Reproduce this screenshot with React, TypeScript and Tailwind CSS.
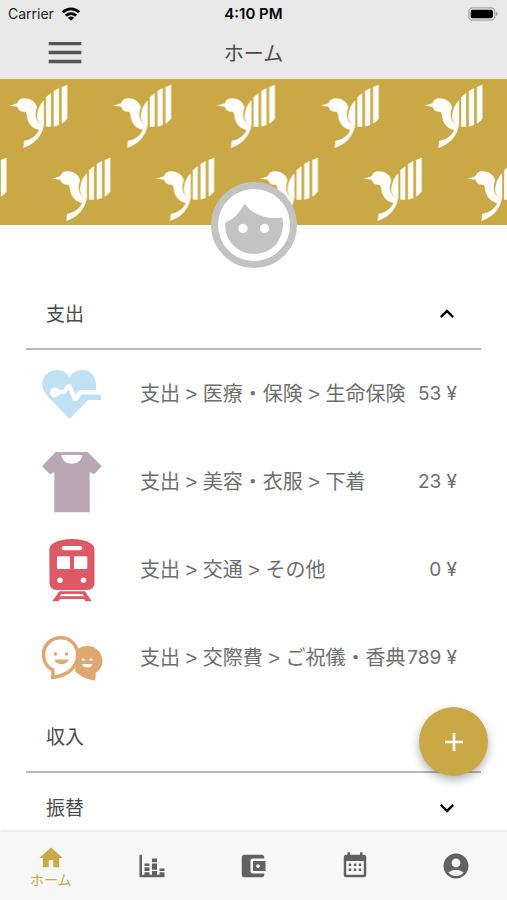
import React, { useState } from 'react';
import {
  MdAccountBalanceWallet,
  MdAccountCircle,
  MdHome,
  MdKeyboardArrowDown,
  MdKeyboardArrowUp,
} from 'react-icons/md';

interface Entry {
  label: string;
  amount: number;
  icon: React.ReactNode;
}

const HeartIcon = () => (
  <svg viewBox="0 0 64 64" className="size-16" aria-hidden="true">
    <path
      fill="#bfe1f3"
      d="M29.500 15C26 10.500 21.500 8 17 8 8.500 8 2.300 14.500 2.300 22c0 5 2 8.500 5.200 12L29.500 57 48 38h13v-8H55.500c.5-2 .7-4 .7-6C56.200 14 50 8 42.500 8 37 8 33 10.500 29.500 15z"
    />
    <path
      fill="none"
      stroke="#fff"
      strokeWidth="4.400"
      strokeLinejoin="bevel"
      d="M15 30h9l5-6.500 6.500 14.500 4.500-7.800h24"
    />
    <circle cx="15" cy="30.500" r="5" fill="#fff" />
  </svg>
);

const ShirtIcon = () => (
  <svg viewBox="0 0 64 64" className="size-16" aria-hidden="true">
    <path
      fill="#bba7b3"
      fillRule="evenodd"
      d="M15.700 2h32l14 14.300-7.700 8-4.300-2.300v40.300H14.300V22L10 24.300l-8-8zM21.300 5c.700 5.500 5 8.700 10.500 8.700S41.600 10.500 42.300 5z"
    />
  </svg>
);

const TrainIcon = () => (
  <svg viewBox="0 0 64 64" className="size-16" aria-hidden="true">
    <path
      fill="#dc5a64"
      d="M9.300 12c0-3 1.500-5.500 4.500-7C19 2 25 1 32 1s13 1 18 4c3 1.500 4.500 4 4.500 7v33c0 4-3 7-7 7h-31c-4 0-7-3-7-7z"
    />
    <rect x="21.700" y="8" width="20.500" height="4.300" rx="2" fill="#fff" />
    <rect x="17" y="18.300" width="13" height="12.700" rx="1" fill="#fff" />
    <rect x="34" y="18.300" width="13.300" height="12.700" rx="1" fill="#fff" />
    <circle cx="20" cy="42.300" r="2.700" fill="#fff" />
    <circle cx="43.500" cy="42.300" r="2.700" fill="#fff" />
    <path
      fill="#dc5a64"
      fillRule="evenodd"
      d="M19.300 53.300H45l6.700 10h-6.300L44 61H20l-1.400 2.300h-6.300zM21.300 56l-1.300 2.200h24L42.700 56z"
    />
  </svg>
);

const ChatIcon = () => (
  <svg viewBox="0 0 64 64" className="size-16" aria-hidden="true">
    <path
      fill="#dfa871"
      d="M47.500 20A15 15 0 0 1 62.500 35c0 5-2.600 9.300-7 12 .400 3 .200 5-.500 7.500-7-1-14-3-20-9.500l3-22c2.500-2 6-3 9.500-3z"
    />
    <path
      fill="#fff"
      stroke="#dfa871"
      strokeWidth="3.500"
      strokeLinejoin="round"
      d="M20.700 11.800c9.600 0 17 7.200 17 17 0 12.500-9.700 20.700-25.200 22.700.7-3 .7-5.200.2-7.700C7 41.300 3.500 35.500 3.500 28.800c0-9.800 7.600-17 17.200-17z"
    />
    <circle cx="15.500" cy="28" r="1.700" fill="#dfa871" />
    <circle cx="26.500" cy="28" r="1.700" fill="#dfa871" />
    <path fill="#dfa871" d="M14.500 33.500h14c-.5 3-3.500 4.500-7 4.500s-6.500-1.500-7-4.500z" />
    <circle cx="43.300" cy="33.700" r="1.300" fill="#fff" />
    <circle cx="51" cy="33.700" r="1.300" fill="#fff" />
    <path fill="#fff" d="M42 38h10.500c-.5 2.500-2.500 3.500-5.200 3.500S42.500 40.500 42 38z" />
  </svg>
);

const FaceIcon = () => (
  <svg viewBox="0 0 86 86" className="size-[86px]" aria-hidden="true">
    <circle cx="43" cy="43" r="39.500" fill="#fff" stroke="#c3c3c3" strokeWidth="7" />
    <path
      fill="#c3c3c3"
      d="M14.500 40.500C23 37 29.500 30 33.500 21.500 41 32 54 38 71.500 35.500 73 44 71.500 54 65 62.500 53 75 34 75 22 63 16 56.500 13.500 49 14.500 40.500z"
    />
    <circle cx="32" cy="46.500" r="4.700" fill="#fff" />
    <circle cx="53.500" cy="46.500" r="4.700" fill="#fff" />
  </svg>
);

const StackedBarsIcon = () => (
  <svg viewBox="0 0 24 24" className="size-[30px]" fill="currentColor" aria-hidden="true">
    <path d="M22 21H2V3h2v16h2v-2h4v2h2v-3h4v3h2v-2h4zM18 14h4v2h-4zM12 6h4v3h-4zM16 15h-4v-5h4zM6 10h4v2H6zM10 16H6v-3h4z" />
  </svg>
);

const CalendarIcon = () => (
  <svg viewBox="0 0 24 24" className="size-[30px]" fill="currentColor" aria-hidden="true">
    <path d="M9 10v2H7v-2zM13 10v2h-2v-2zM17 10v2h-2v-2zM19 3a2 2 0 0 1 2 2v14a2 2 0 0 1-2 2H5a2 2 0 0 1-2-2V5a2 2 0 0 1 2-2h1V1h2v2h8V1h2v2zM19 19V8H5v11zM9 14v2H7v-2zM13 14v2h-2v-2zM17 14v2h-2v-2z" />
  </svg>
);

const WifiIcon = () => (
  <svg viewBox="0 0 18 14" className="h-3.5 w-[18px]" aria-hidden="true">
    <path fill="none" stroke="#000" strokeWidth="2.800" d="M.9 5.200c4.600-4.500 11.600-4.500 16.200 0M3.900 8.800c2.900-2.800 7.300-2.800 10.200 0" />
    <path d="M5.900 10.800c1.800-1.600 4.400-1.600 6.200 0L9 13.800z" />
  </svg>
);

const BatteryIcon = () => (
  <svg viewBox="0 0 31 14" className="h-3.5 w-[31px]" aria-hidden="true">
    <rect x=".8" y=".8" width="26" height="12.400" rx="3.800" fill="none" stroke="#a5a5a5" strokeWidth="1.300" />
    <rect x="2.700" y="2.700" width="22.200" height="8.600" rx="2" />
    <path fill="#a5a5a5" d="M28 4.800c2.200.6 2.200 3.800 0 4.400z" />
  </svg>
);

const Bird = () => (
  <g fill="#fffefa">
    {/* beak, head and body */}
    <path d="M28 80L52 73C55 62 64 57 74 58 90 58 106 68 111 84 109 92 106 99 107 112 109 124 115 134 131 142 128 152 126 162 118 172 106 190 90 200 70 207L72 185C88 184 108 174 117 153 96 148 84 134 81 114 80 106 79 101 76 98 64 100 55 94 52 83z" />
    {/* wing feathers */}
    <path d="M132 64V142C119 137 111 126 111 112 112 92 120 76 132 64z" />
    <path d="M138 55L153 42V143H138z" />
    <path d="M161 36L177 27V138L161 143z" />
    <path d="M185 24L202 17V118C198 125 193 130 185 134z" />
  </g>
);

const Banner = () => (
  <svg className="block h-[146px] w-full" aria-hidden="true">
    <defs>
      <pattern
        id="birds"
        width="311.400"
        height="438"
        patternUnits="userSpaceOnUse"
        patternTransform="scale(0.3333)"
      >
        <Bird />
        <g transform="translate(129 219)">
          <Bird />
        </g>
        <g transform="translate(-182.400 219)">
          <Bird />
        </g>
      </pattern>
    </defs>
    <rect width="100%" height="100%" fill="#c9a845" />
    <rect width="100%" height="100%" fill="url(#birds)" />
  </svg>
);

const expenses: Entry[] = [
  { label: '支出 > 医療・保険 > 生命保険', amount: 53, icon: <HeartIcon /> },
  { label: '支出 > 美容・衣服 > 下着', amount: 23, icon: <ShirtIcon /> },
  { label: '支出 > 交通 > その他', amount: 0, icon: <TrainIcon /> },
  { label: '支出 > 交際費 > ご祝儀・香典', amount: 789, icon: <ChatIcon /> },
];

interface SectionProps {
  title: string;
  entries?: Entry[];
  defaultOpen?: boolean;
}

const Section: React.FC<SectionProps> = ({ title, entries = [], defaultOpen = false }) => {
  const [open, setOpen] = useState(defaultOpen);

  return (
    <section>
      <h2>
        <button
          type="button"
          aria-expanded={open}
          onClick={() => setOpen(!open)}
          className="flex h-[71px] w-full items-center justify-between border-b-2 border-[#b9b9b9] px-5 text-[19px] text-[#4a4a4a]"
        >
          <span className="pt-1">{title}</span>
          {open ? (
            <MdKeyboardArrowUp className="size-7 text-black" />
          ) : (
            <MdKeyboardArrowDown className="size-7 text-black" />
          )}
        </button>
      </h2>
      {open && (
        <ul>
          {entries.map((entry) => (
            <li key={entry.label} className="flex h-[88px] items-center pr-6 pl-3.5">
              {entry.icon}
              <span className="ml-9 min-w-0 flex-1 font-['Liberation_Sans','Noto_Sans_CJK_JP',sans-serif] text-[20px] whitespace-nowrap text-[#6e6e6e]">
                {entry.label}
              </span>
              <span className="shrink-0 text-[19px] text-[#6e6e6e]">{entry.amount} ¥</span>
            </li>
          ))}
        </ul>
      )}
    </section>
  );
};

const tabs = [
  { name: 'ホーム', icon: <MdHome className="size-7" />, active: true },
  { name: 'グラフ', icon: <StackedBarsIcon /> },
  { name: '口座', icon: <MdAccountBalanceWallet className="size-[30px]" /> },
  { name: 'カレンダー', icon: <CalendarIcon /> },
  { name: 'アカウント', icon: <MdAccountCircle className="size-[30px]" /> },
];

const App: React.FC = () => {
  return (
    <div className="relative flex h-screen flex-col overflow-hidden bg-white font-[Inter,'Noto_Sans_CJK_JP',sans-serif]">
      <header className="shrink-0 bg-[#e9e9e9]">
        <div className="grid h-7 grid-cols-3 items-center px-2 text-sm text-black">
          <span className="flex items-center gap-2 text-[#222]">
            Carrier
            <WifiIcon />
          </span>
          <span className="text-center text-[15px] font-semibold">4:10 PM</span>
          <span className="flex justify-end">
            <BatteryIcon />
          </span>
        </div>
        <div className="grid h-[51px] grid-cols-3 items-center">
          <button type="button" aria-label="メニュー" className="ml-12 w-[34px] justify-self-start">
            <svg viewBox="0 0 34 24" className="h-6 w-[34px]" aria-hidden="true">
              <path stroke="#555" strokeWidth="3.400" d="M.7 1.500h32.600M.7 10.500h32.600M.7 19.500h32.600" />
            </svg>
          </button>
          <h1 className="text-center text-[20px] text-[#4a4a4a]">ホーム</h1>
        </div>
      </header>

      <main className="min-h-0 flex-1 overflow-y-auto [scrollbar-width:none]">
        <div className="relative mb-[54px]">
          <Banner />
          <button
            type="button"
            aria-label="プロフィール"
            className="absolute bottom-0 left-1/2 -translate-x-1/2 translate-y-1/2 rounded-full"
          >
            <FaceIcon />
          </button>
        </div>
        <div className="px-[26px]">
          <Section title="支出" entries={expenses} defaultOpen />
          <Section title="収入" />
          <Section title="振替" />
        </div>
      </main>

      <nav className="z-10 grid h-[68px] shrink-0 grid-cols-5 bg-[#f7f7f7] text-[#616161] shadow-[0_-1px_3px_rgba(0,0,0,0.14)]">
        {tabs.map((tab) => (
          <a
            key={tab.name}
            href="#"
            aria-label={tab.name}
            aria-current={tab.active ? 'page' : undefined}
            className={
              tab.active
                ? 'flex flex-col items-center justify-center text-[#c9a845]'
                : 'flex flex-col items-center justify-center'
            }
          >
            {tab.icon}
            {tab.active && <span className="text-sm leading-4">{tab.name}</span>}
          </a>
        ))}
      </nav>

      <button
        type="button"
        aria-label="追加"
        className="absolute right-[19px] bottom-[124px] z-20 flex size-[69px] items-center justify-center rounded-full bg-[#c9a845] shadow-[0_4px_10px_rgba(0,0,0,0.3)]"
      >
        <svg viewBox="0 0 18 18" className="size-[18px]" aria-hidden="true">
          <path stroke="#fff" strokeWidth="2.600" d="M9 0v18M0 9h18" />
        </svg>
      </button>
    </div>
  );
};

export default App;
